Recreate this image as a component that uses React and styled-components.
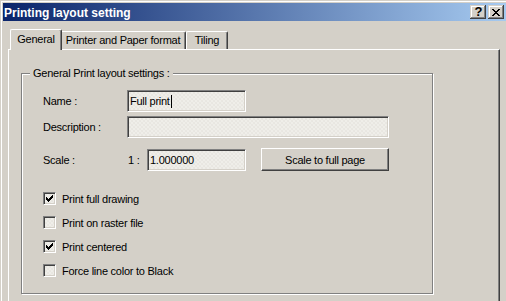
import React from 'react';
import styled, { createGlobalStyle } from 'styled-components';

const Global = createGlobalStyle`
  html, body { margin: 0; padding: 0; background: #d4d0c8; }
  body {
    font-family: "Liberation Sans", Arial, sans-serif;
    font-size: 11px;
    color: #000;
  }
  * { box-sizing: border-box; }
`;

const Window = styled.div`
  width: 506px;
  height: 301px;
  overflow: hidden;
  background: #d4d0c8;
  padding: 3px 0 0 3px;
  box-shadow: inset 1px 1px 0 #d4d0c8, inset 2px 2px 0 #fff;
  display: flex;
  flex-direction: column;
`;

const TitleBar = styled.div`
  height: 18px;
  flex: none;
  display: flex;
  align-items: center;
  padding: 0 2px 0 1px;
  background: linear-gradient(to right, #0a246a, #a6caf0);
`;

const TitleText = styled.div`
  flex: 1;
  color: #fff;
  font-weight: bold;
  font-size: 12px;
  line-height: 18px;
  padding-top: 1px;
  white-space: nowrap;
`;

const CaptionButtons = styled.div`
  display: flex;
  gap: 2px;
`;

const CaptionButton = styled.div`
  width: 16px;
  height: 14px;
  background: #d4d0c8;
  box-shadow: inset -1px -1px 0 #404040, inset 1px 1px 0 #d4d0c8,
    inset -2px -2px 0 #808080, inset 2px 2px 0 #fff;
  display: flex;
  align-items: center;
  justify-content: center;
  font-weight: bold;
  font-size: 13px;
  line-height: 12px;
  color: #000;
  padding-left: ${(p) => p.$padLeft || 0}px;
`;

const TabControl = styled.div`
  margin: 8px 0 0 5px;
  width: 492px;
  flex: 1;
  display: flex;
  flex-direction: column;
`;

const TabRow = styled.div`
  height: 20px;
  display: flex;
  align-items: flex-end;
  padding-left: 4px;
`;

const Tab = styled.div`
  position: relative;
  width: ${(p) => (p.$active ? p.$w + 4 : p.$w)}px;
  height: ${(p) => (p.$active ? 21 : 18)}px;
  margin: ${(p) => (p.$active ? '0 -2px -1px -2px' : '0')};
  z-index: ${(p) => (p.$active ? 1 : 0)};
  background: #d4d0c8;
  border-top: 1px solid #fff;
  border-left: 1px solid #fff;
  border-right: 1px solid #404040;
  border-radius: 2px 2px 0 0;
  box-shadow: inset -1px 0 0 #808080;
  text-align: center;
  line-height: ${(p) => (p.$active ? 18 : 17)}px;
  letter-spacing: -0.25px;
  white-space: nowrap;
`;

const Panel = styled.div`
  flex: 1;
  border-top: 1px solid #fff;
  border-left: 1px solid #fff;
  border-right: 1px solid #404040;
  box-shadow: inset -1px 0 0 #808080;
  padding: 23px 0 0 12px;
`;

const GroupBox = styled.div`
  position: relative;
  width: 412px;
  height: 221px;
  border: 1px solid #808080;
  box-shadow: inset 1px 1px 0 #fff, 1px 1px 0 #fff;
  padding: 16px 0 0 21px;
  display: flex;
  flex-direction: column;
`;

const Legend = styled.div`
  position: absolute;
  top: -7px;
  left: 8px;
  padding: 0 3px;
  background: #d4d0c8;
  line-height: 13px;
  letter-spacing: -0.25px;
  white-space: nowrap;
`;

const FieldRow = styled.div`
  display: flex;
  align-items: center;
  height: ${(p) => p.$h || 22}px;
  margin-top: ${(p) => p.$mt || 0}px;
`;

const Label = styled.div`
  width: ${(p) => p.$w || 84}px;
  flex: none;
  padding-left: ${(p) => p.$pl || 0}px;
  letter-spacing: -0.25px;
  white-space: nowrap;
`;

const dotted = `
  background-color: #efeee9;
  background-image:
    radial-gradient(circle, #dbd8d1 0.5px, transparent 0.8px),
    radial-gradient(circle, #dbd8d1 0.5px, transparent 0.8px);
  background-size: 4px 4px, 4px 4px;
  background-position: 0 0, 2px 2px;
`;

const TextField = styled.div`
  width: ${(p) => p.$w}px;
  height: 22px;
  flex: none;
  border: 1px solid;
  border-color: #808080 #fff #fff #808080;
  box-shadow: inset 1px 1px 0 #404040, inset -1px -1px 0 #d4d0c8;
  ${dotted}
  padding: 0 2px;
  display: flex;
  align-items: center;
  letter-spacing: -0.25px;
  white-space: nowrap;
`;

const Caret = styled.span`
  display: inline-block;
  width: 1px;
  height: 13px;
  background: #000;
  margin-left: 1px;
`;

const PushButton = styled.div`
  width: ${(p) => p.$w}px;
  height: 23px;
  margin-left: ${(p) => p.$ml || 0}px;
  flex: none;
  background: #d4d0c8;
  border: 1px solid;
  border-color: #fff #404040 #404040 #fff;
  box-shadow: inset -1px -1px 0 #808080;
  display: flex;
  align-items: center;
  justify-content: center;
  letter-spacing: -0.25px;
  white-space: nowrap;
`;

const CheckList = styled.div`
  display: flex;
  flex-direction: column;
  gap: 11px;
  margin-top: 21px;
`;

const CheckRow = styled.div`
  display: flex;
  align-items: center;
  gap: 6px;
  height: 13px;
  letter-spacing: -0.25px;
  white-space: nowrap;
`;

const CheckBox = styled.div`
  width: 13px;
  height: 13px;
  flex: none;
  border: 1px solid;
  border-color: #808080 #fff #fff #808080;
  box-shadow: inset 1px 1px 0 #404040, inset -1px -1px 0 #d4d0c8;
  ${dotted}
  display: flex;
  align-items: center;
  justify-content: center;
`;

const CheckMark = () => {
  const tops = [2, 3, 4, 3, 2, 1, 0];
  return (
    <svg width="7" height="7" viewBox="0 0 7 7" shapeRendering="crispEdges">
      {tops.map((t, i) => (
        <rect key={i} x={i} y={t} width="1" height="3" fill="#000" />
      ))}
    </svg>
  );
};

const CloseGlyph = () => {
  const rows = [
    [[0, 2], [6, 2]],
    [[1, 2], [5, 2]],
    [[2, 4]],
    [[3, 2]],
    [[2, 4]],
    [[1, 2], [5, 2]],
    [[0, 2], [6, 2]],
  ];
  return (
    <svg width="8" height="7" viewBox="0 0 8 7" shapeRendering="crispEdges">
      {rows.map((segs, y) =>
        segs.map(([x, w], k) => (
          <rect key={`${y}-${k}`} x={x} y={y} width={w} height="1" fill="#000" />
        ))
      )}
    </svg>
  );
};

const checks = [
  { label: 'Print full drawing', on: true },
  { label: 'Print on raster file', on: false },
  { label: 'Print centered', on: true },
  { label: 'Force line color to Black', on: false },
];

const tabs = [
  { label: 'General', w: 48, active: true },
  { label: 'Printer and Paper format', w: 126 },
  { label: 'Tiling', w: 42 },
];

export default function App() {
  return (
    <>
      <Global />
      <Window>
        <TitleBar>
          <TitleText>Printing layout setting</TitleText>
          <CaptionButtons>
            <CaptionButton $padLeft={1}>?</CaptionButton>
            <CaptionButton>
              <CloseGlyph />
            </CaptionButton>
          </CaptionButtons>
        </TitleBar>
        <TabControl>
          <TabRow>
            {tabs.map((t) => (
              <Tab key={t.label} $w={t.w} $active={t.active}>
                {t.label}
              </Tab>
            ))}
          </TabRow>
          <Panel>
            <GroupBox>
              <Legend>General Print layout settings :</Legend>
              <FieldRow>
                <Label>Name :</Label>
                <TextField $w={119}>
                  Full print
                  <Caret />
                </TextField>
              </FieldRow>
              <FieldRow $mt={4}>
                <Label>Description :</Label>
                <TextField $w={262} />
              </FieldRow>
              <FieldRow $mt={10} $h={23}>
                <Label>Scale :</Label>
                <Label $w={20} $pl={1}>1 :</Label>
                <TextField $w={99}>1.000000</TextField>
                <PushButton $w={128} $ml={15}>Scale to full page</PushButton>
              </FieldRow>
              <CheckList>
                {checks.map((c) => (
                  <CheckRow key={c.label}>
                    <CheckBox>{c.on && <CheckMark />}</CheckBox>
                    {c.label}
                  </CheckRow>
                ))}
              </CheckList>
            </GroupBox>
          </Panel>
        </TabControl>
      </Window>
    </>
  );
}
